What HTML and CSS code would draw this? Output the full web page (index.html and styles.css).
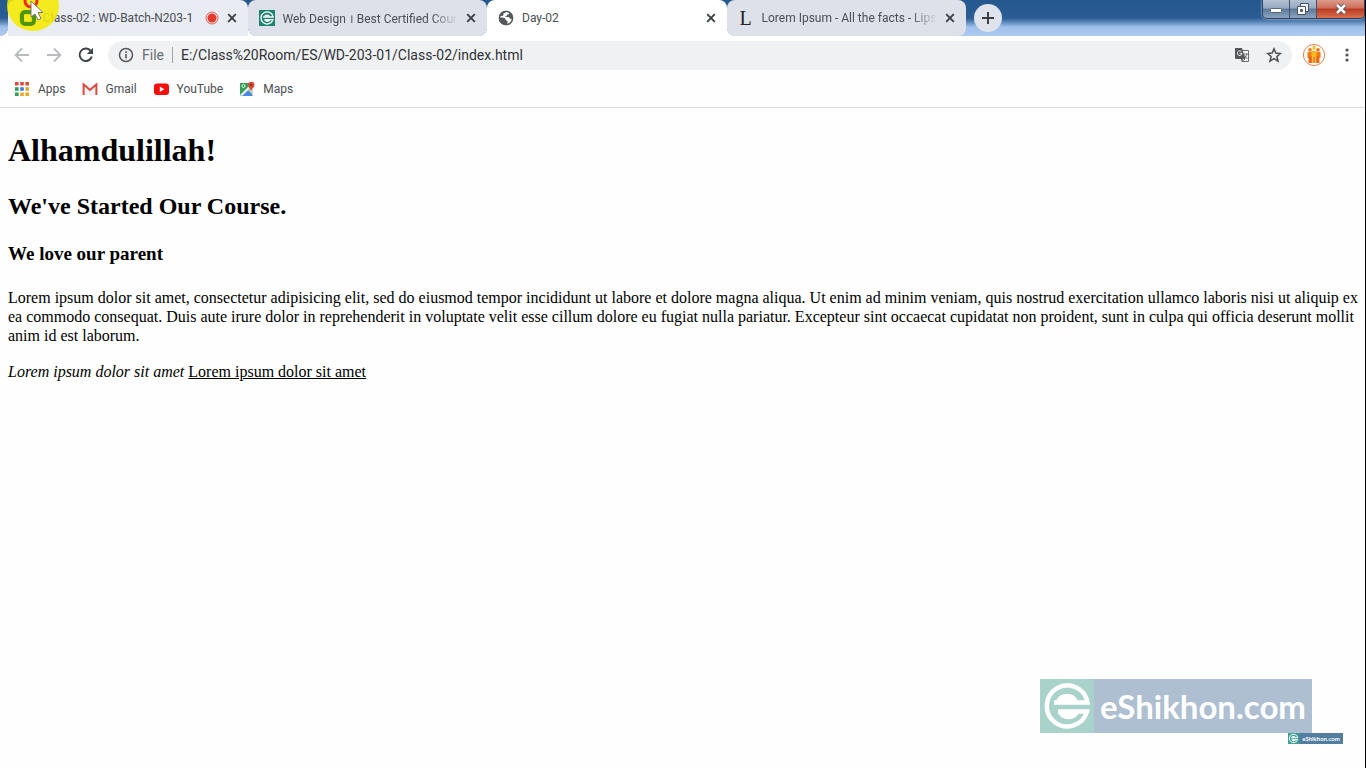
FILE: index.html
```html
<!DOCTYPE html>
<html lang="en">
<head>
  <meta charset="utf-8">
  <meta name="viewport" content="width=device-width, initial-scale=1.0">
  <title>Day-02</title>
  <link rel="stylesheet" href="styles.css">
</head>
<body>
  <svg class="defs" width="0" height="0" aria-hidden="true">
    <symbol id="close" viewBox="0 0 10 10">
      <path d="M1.2 1.2l7.6 7.6M8.8 1.2L1.2 8.8" stroke="#3c4043" stroke-width="1.9" fill="none"/>
    </symbol>
    <symbol id="logo" viewBox="0 0 54 54">
      <path d="M14 23.500H47.500A20.500 20.500 0 1 0 47 32.500H18" fill="none" stroke="#fff" stroke-width="4.500"/>
      <path d="M16 22a12 12 0 0 1 22 0zM18 34h21a12 12 0 0 1-21 0z" fill="#fff"/>
    </symbol>
  </svg>

  <header class="browser">
    <div class="title-bar">
      <div class="tabs">
        <div class="tab tab-hover">
          <svg class="tab-icon" viewBox="0 0 16 16"><rect x="2" y="3" width="12" height="10" rx="3" fill="none" stroke="#3f8f00" stroke-width="4"/></svg>
          <a class="tab-title" href="#">Class-02 : WD-Batch-N203-1</a>
          <svg class="rec" viewBox="0 0 14 14"><circle cx="7" cy="7" r="6" fill="none" stroke="#ea5b4a"/><circle cx="7" cy="7" r="4.500" fill="#e33b2b"/></svg>
          <button class="tab-close" aria-label="Close tab"><svg><use href="#close"/></svg></button>
        </div>
        <div class="tab">
          <svg class="tab-icon" viewBox="0 0 54 54"><rect width="54" height="54" fill="#1c8470"/><use href="#logo"/></svg>
          <a class="tab-title fade" href="#">Web Design । Best Certified Cour</a>
          <button class="tab-close" aria-label="Close tab"><svg><use href="#close"/></svg></button>
        </div>
        <div class="tab tab-active">
          <svg class="tab-icon" viewBox="0 0 16 16">
            <circle cx="8" cy="8" r="7.200" fill="#55585d"/>
            <path d="M8.300 1.600c1.200.2 2.300.6 3.200 1.300-.5 1.300-1.400 1.300-2.300 1.700-.4.300.2 1-.6 1.300-.9.200-1.300.4-1.200 1.200h3.200c1 .2 1 1.800 2.300 1.800h1.500c-.4 2.400-2.200 4.600-4.800 5.200-.9-.2-.2-1.700.2-2.300-.2-1.100-1.300-1-2-1.500-.5-.6-.1-1.200-.5-1.700-1-.7-2.900-.7-5.300-1 .1-.7.200-1.200.4-1.700 1.300.4 2.500.1 2.900-.7.300-.8-.2-1.300.5-1.900.9-.5 2.100-.1 2.500-1.700z" fill="#fff"/>
            <circle cx="8" cy="8" r="6.600" fill="none" stroke="#55585d" stroke-width="1.400"/>
          </svg>
          <a class="tab-title" href="#">Day-02</a>
          <button class="tab-close" aria-label="Close tab"><svg><use href="#close"/></svg></button>
        </div>
        <div class="tab">
          <span class="tab-icon letter">L</span>
          <a class="tab-title fade" href="#">Lorem Ipsum - All the facts - Lips</a>
          <button class="tab-close" aria-label="Close tab"><svg><use href="#close"/></svg></button>
        </div>
      </div>
      <button class="new-tab" aria-label="New tab">
        <svg width="14" height="14" viewBox="0 0 14 14"><path d="M7 1v12M1 7h12" stroke="#3c4043" stroke-width="2"/></svg>
      </button>
      <div class="window-controls">
        <button aria-label="Minimize"><svg width="14" height="14" viewBox="0 0 14 14"><rect x="1.500" y="6.500" width="11" height="4" rx="1" fill="#fff" stroke="#56647a"/></svg></button>
        <button aria-label="Restore"><svg width="14" height="14" viewBox="0 0 14 14"><path d="M4.500 1.500h8v8h-8z" fill="#edf0f5" stroke="#46546a"/><path d="M1.500 4.500h8v8h-8z" fill="#fff" stroke="#46546a"/><path d="M4.500 7.500h2v2h-2z" fill="#8090a8" stroke="#46546a"/></svg></button>
        <button class="window-close" aria-label="Close"><svg width="14" height="14" viewBox="0 0 14 14"><path d="M3 3l8 8M11 3l-8 8" stroke="#5c4852" stroke-width="4.500"/><path d="M3 3l8 8M11 3l-8 8" stroke="#fff" stroke-width="2.600"/></svg></button>
      </div>
    </div>

    <div class="toolbar">
      <button aria-label="Back"><svg width="16" height="16" viewBox="0 0 16 16"><path d="M15 8H2M8 1.500L1.500 8 8 14.500" fill="none" stroke="#b9bbbf" stroke-width="1.800"/></svg></button>
      <button aria-label="Forward"><svg width="16" height="16" viewBox="0 0 16 16"><path d="M1 8h13M8 1.500L14.500 8 8 14.500" fill="none" stroke="#b9bbbf" stroke-width="1.800"/></svg></button>
      <button aria-label="Reload"><svg width="16" height="16" viewBox="0 0 16 16"><path d="M13.800 9.500A6.200 6.200 0 1 1 12.500 3.700" fill="none" stroke="#404347" stroke-width="2"/><path d="M15 .8v6.200H8.800z" fill="#404347"/></svg></button>
      <div class="address">
        <svg width="16" height="16" viewBox="0 0 16 16"><circle cx="8" cy="8" r="6.500" fill="none" stroke="#55585d" stroke-width="1.500"/><path d="M8 7v4.500M8 4.200v1.700" stroke="#55585d" stroke-width="1.600"/></svg>
        <label for="url">File</label>
        <input type="text" id="url" value="E:/Class%20Room/ES/WD-203-01/Class-02/index.html">
        <button aria-label="Translate"><svg width="16" height="16" viewBox="0 0 16 16"><path d="M6 3.500h8.500v11H8z" fill="#f5f5f5" stroke="#6a6c70"/><path d="M1 1h7l3.500 11H2a1 1 0 0 1-1-1z" fill="#55585d"/><path d="M7.500 4.800A2.300 2.300 0 1 0 8 6.600H5.700" fill="none" stroke="#f1f3f4"/><path d="M9.500 7h4.500M12.800 7c-.4 2-1.300 3.300-2.500 4.500M10.500 8.500l3 3.500M8.500 12l-.5 2.500 3-2.500" fill="none" stroke="#6a6c70"/></svg></button>
        <button aria-label="Bookmark this page"><svg width="16" height="16" viewBox="0 0 16 16"><path d="M8 1.800l1.800 4.300 4.600.4-3.500 3 1.100 4.600-4-2.500-4 2.500 1.100-4.600-3.500-3 4.600-.4z" fill="none" stroke="#4a4d51" stroke-width="1.500"/></svg></button>
      </div>
      <button class="profile" aria-label="Profile">
        <svg width="24" height="24" viewBox="0 0 24 24"><circle cx="12" cy="12" r="10.600" fill="#fff" stroke="#ee8050"/><g fill="#ef7a1a"><circle cx="8" cy="6.800" r="1.900"/><circle cx="16" cy="6.800" r="1.900"/><path d="M5.500 9h5v11H6.500v-5h-1zM13.500 9h5v6h-1v5h-4z"/></g><path d="M10.700 2.800h2.600v4h-2.600zM9.500 8h5v5h-1v7h-3v-7h-1z" fill="#fbb81c"/><path d="M8 13v7M16 13v7M12 14v6" stroke="#e04b20" stroke-width=".8"/></svg>
      </button>
      <button class="menu" aria-label="Menu"><svg width="16" height="16" viewBox="0 0 16 16" fill="#505357"><circle cx="8" cy="3" r="1.600"/><circle cx="8" cy="8" r="1.600"/><circle cx="8" cy="13" r="1.600"/></svg></button>
    </div>

    <nav class="bookmarks">
      <a href="#"><svg width="16" height="16" viewBox="0 0 16 16"><g fill="#d7503e"><path d="M1 1h3.600v3.600H1zM6.200 1h3.600v3.600H6.200zM11.400 1H15v3.600h-3.600z"/></g><path d="M1 6.200h3.600v3.600H1z" fill="#2f9c5c"/><path d="M6.200 6.200h3.600v3.600H6.200z" fill="#3b7de0"/><path d="M11.400 6.200H15v3.600h-3.600z" fill="#e8a928"/><path d="M1 11.400h3.600V15H1z" fill="#2f9c5c"/><path d="M6.200 11.400h3.600V15H6.200zM11.400 11.400H15V15h-3.600z" fill="#e8a928"/></svg>Apps</a>
      <a href="#"><svg width="16" height="16" viewBox="0 0 16 16"><path d="M1 3h14v11H1z" fill="#f4f2f2"/><path d="M1.600 14V3.500L8 9l6.400-5.500V14" fill="none" stroke="#d54c43" stroke-width="2"/></svg>Gmail</a>
      <a href="#"><svg width="16" height="16" viewBox="0 0 16 16"><rect x="1" y="2.500" width="15" height="11.500" rx="3" fill="#f80d0d"/><path d="M6.800 5.500v5.500l4.500-2.700z" fill="#fff"/></svg>YouTube</a>
      <a href="#"><svg width="16" height="16" viewBox="0 0 16 16"><path d="M1 2h12v12.500H1z" fill="#35a058"/><path d="M2 15l6-6 6 6z" fill="#4a87e8"/><path d="M1 14L13 2l2 2L3 15z" fill="#e9edf0"/><path d="M4 15l4.500-5 5 5z" fill="#4a87e8"/><path d="M9 9l5 5V8z" fill="#ccd3d7"/><circle cx="4.500" cy="5" r="1.500" fill="none" stroke="#dff2e4"/><path d="M12 10c0-2.500-3-3-3-6a3 3 0 0 1 6.500 0c0 3-3 3.500-3.500 6z" fill="#d94b3d"/><circle cx="12.200" cy="4" r="1.100" fill="#7d251f"/></svg>Maps</a>
    </nav>
  </header>

  <main>
    <h1>Alhamdulillah!</h1>
    <h2>We've Started Our Course.</h2>
    <h3>We love our parent</h3>
    <p>Lorem ipsum dolor sit amet, consectetur adipisicing elit, sed do eiusmod tempor incididunt ut labore et dolore magna aliqua. Ut enim ad minim veniam, quis nostrud exercitation ullamco laboris nisi ut aliquip ex ea commodo consequat. Duis aute irure dolor in reprehenderit in voluptate velit esse cillum dolore eu fugiat nulla pariatur. Excepteur sint occaecat cupidatat non proident, sunt in culpa qui officia deserunt mollit anim id est laborum.</p>
    <p><i>Lorem ipsum dolor sit amet</i> <u>Lorem ipsum dolor sit amet</u></p>
  </main>

  <div class="watermark">
    <svg viewBox="0 0 54 54"><use href="#logo"/></svg>
    <span>eShikhon.com</span>
  </div>
  <div class="watermark small">
    <svg viewBox="0 0 54 54"><use href="#logo"/></svg>
    <span>eShikhon.com</span>
  </div>

  <!-- mouse pointer with click highlight -->
  <svg class="pointer" width="60" height="34" viewBox="0 0 60 34" aria-hidden="true">
    <ellipse cx="33" cy="6" rx="26" ry="25" fill="#f5ea00" fill-opacity=".88"/>
    <rect x="22" y="12" width="12" height="12" rx="3" fill="none" stroke="#4f9500" stroke-width="4"/>
    <circle cx="31" cy="1" r="6" fill="none" stroke="#f02a10" stroke-width="3"/>
    <path d="M31 1v16l4-3 3 6 3-1.500-3-6h5z" fill="#fff" stroke="#777"/>
  </svg>
</body>
</html>
```
FILE: styles.css
```css
* {
  box-sizing: border-box;
}

body {
  margin: 0;
  min-height: 100vh;
  position: relative;
  overflow: hidden;
  background-color: #fefefe;
  border-right: 1px solid #000;
  font-family: "Liberation Serif", serif;
}

button {
  display: flex;
  align-items: center;
  justify-content: center;
  padding: 0;
  border: none;
  background: none;
  cursor: pointer;
}

a {
  color: inherit;
  text-decoration: none;
}

.defs {
  position: absolute;
}

.browser {
  font-family: Roboto, sans-serif;
  font-size: 12px;
  color: #4b4e53;
  border-bottom: 1px solid #d9d9db;
}

/* tab strip */
.title-bar {
  display: flex;
  height: 36px;
  padding-left: 8px;
  background: linear-gradient(#25588f 0, #2a5c93 18px, #5b87b8 22px, #9fc0ea 27px, #aecbf2 36px);
}

.tabs {
  display: flex;
  flex: 0 1 958px;
  min-width: 0;
}

.tab {
  display: flex;
  align-items: center;
  flex: 1 1 0;
  min-width: 0;
  gap: 8px;
  padding: 0 11px;
  border-radius: 8px;
  background-color: #dee1e9;
  position: relative;
}

.tab-hover {
  background-color: #e9ecf3;
}

.tab-active {
  background-color: #fff;
}

.tab-hover,
.tab-active {
  border-radius: 8px 8px 0 0;
}

.tab-hover::before,
.tab-hover::after,
.tab-active::before,
.tab-active::after {
  content: "";
  position: absolute;
  bottom: 0;
  width: 8px;
  height: 8px;
}

.tab-hover::before,
.tab-active::before {
  right: 100%;
  background: radial-gradient(circle at 0 0, transparent 8px, #fff 8px);
}

.tab-hover::after,
.tab-active::after {
  left: 100%;
  background: radial-gradient(circle at 100% 0, transparent 8px, #fff 8px);
}

.tab-icon {
  width: 16px;
  height: 16px;
  flex: none;
}

.letter {
  font: 20px/16px "Liberation Serif", serif;
  text-align: center;
  color: #222;
}

.tab-title {
  flex: 1;
  min-width: 0;
  overflow: hidden;
  white-space: nowrap;
}

.fade {
  mask-image: linear-gradient(to right, #000 85%, transparent);
}

.rec {
  width: 14px;
  height: 14px;
  flex: none;
}

.tab-close svg {
  width: 10px;
  height: 10px;
}

.new-tab {
  width: 28px;
  height: 28px;
  margin: 4px 0 0 8px;
  border-radius: 50%;
  background-color: #dee3ec;
}

.window-controls {
  display: flex;
  height: 19px;
  margin-left: auto;
  border: 1px solid #33435c;
  border-top: none;
  border-radius: 0 0 5px 5px;
  overflow: hidden;
  box-shadow: 0 0 2px #fff;
}

.window-controls button {
  width: 27px;
  background: linear-gradient(#b3c2d4, #94a8c0 45%, #5c7798 50%, #8ba5c1);
  border-right: 1px solid #41536e;
}

.window-controls .window-close {
  width: 47px;
  border-right: none;
  background: linear-gradient(#dc9b8b, #cf6c58 45%, #b93a20 50%, #d8704f);
}

/* toolbar */
.toolbar {
  display: flex;
  align-items: center;
  gap: 16px;
  height: 38px;
  padding: 0 10px 0 14px;
  background-color: #fff;
}

.address {
  display: flex;
  align-items: center;
  flex: 1;
  height: 29px;
  margin-right: -6px;
  margin-left: -2px;
  padding: 0 10px;
  border-radius: 15px;
  background-color: #f0f1f3;
  font-size: 14px;
}

.address label {
  margin-left: 8px;
  padding-right: 8px;
  line-height: 16px;
  border-right: 1px solid #a4a6aa;
  color: #6a6d72;
}

.address input {
  flex: 1;
  min-width: 0;
  padding: 0 8px;
  border: none;
  outline: none;
  background: none;
  font: inherit;
  color: #303236;
}

.address button {
  margin-left: 16px;
}

.menu {
  margin-left: -3px;
}

.profile {
  width: 24px;
}

/* bookmarks bar */
.bookmarks {
  display: flex;
  gap: 16px;
  height: 33px;
  padding: 0 14px;
  line-height: 30px;
}

.bookmarks a {
  display: flex;
  align-items: center;
  gap: 8px;
  height: 30px;
}

/* page */
main {
  padding: 0 4px 0 8px;
  color: #000;
  font-size: 16px;
  line-height: 19px;
}

h1 {
  margin: 23px 0;
  font-size: 32px;
  line-height: 38px;
}

h2 {
  margin: 20px 0;
  font-size: 24px;
  line-height: 28px;
}

h3 {
  margin: 20px 0;
  font-size: 19px;
  line-height: 28px;
}

p {
  margin: 17px 0;
}

/* logo over the page corner */
.watermark {
  position: absolute;
  right: 53px;
  bottom: 35px;
  display: flex;
  width: 272px;
  height: 54px;
  background-color: #adbfd0;
  color: #fff;
  font: bold 33px/54px Lato, sans-serif;
}

.watermark svg {
  width: 54px;
  height: 54px;
  background-color: #a9d2ca;
}

.watermark span {
  flex: 1;
  text-align: center;
}

.small {
  right: 22px;
  bottom: 24px;
  width: 55px;
  height: 11px;
  background-color: #527e9f;
  font-size: 6px;
  line-height: 11px;
}

.small svg {
  width: 11px;
  height: 11px;
  background-color: #43a193;
}

.pointer {
  position: absolute;
  top: 0;
  left: 0;
}
```
